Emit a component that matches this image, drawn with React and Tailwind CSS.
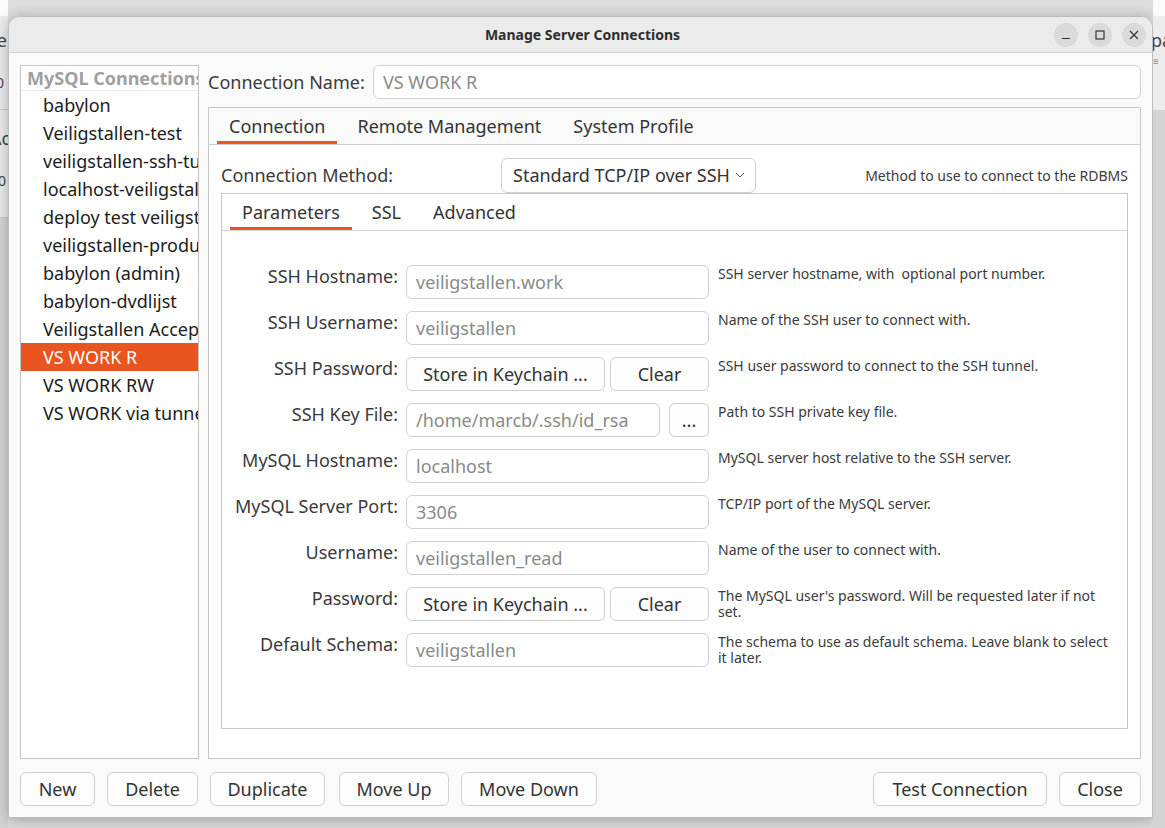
import React from "react";

const connections = [
  "babylon",
  "Veiligstallen-test",
  "veiligstallen-ssh-tunnel",
  "localhost-veiligstallen",
  "deploy test veiligstallen",
  "veiligstallen-productie",
  "babylon (admin)",
  "babylon-dvdlijst",
  "Veiligstallen Acceptatie",
  "VS WORK R",
  "VS WORK RW",
  "VS WORK via tunnel",
];

const Input = ({ value, className = "" }) => (
  <div
    className={`h-[34px] rounded-[6px] border border-[#d0d0d0] bg-white px-[9px] flex items-center text-[18px] text-[#8a8a8a] whitespace-nowrap overflow-hidden ${className}`}
  >
    {value}
  </div>
);

const Btn = ({ children, className = "" }) => (
  <div
    className={`h-[34px] rounded-[6px] border border-[#d0d0d0] bg-[#fdfdfd] flex items-center justify-center text-[18px] text-[#333] whitespace-nowrap ${className}`}
  >
    {children}
  </div>
);

const FormRow = ({ label, children, desc }) => (
  <div className="flex items-start">
    <div className="w-[176px] h-[34px] text-right leading-[22px] text-[18px] text-[#3a3a3a] whitespace-nowrap">
      {label}
    </div>
    <div className="w-[303px] ml-[8px] flex gap-[5px]">{children}</div>
    <div className="ml-[9px] w-[400px] text-[14px] leading-[16px] text-[#3a3a3a] pt-[1px]">
      {desc}
    </div>
  </div>
);

const Tab = ({ children, active }) => (
  <div
    className={`px-[12px] pt-[4px] h-full flex items-center text-[18px] text-[#333] border-b-[3px] ${
      active ? "border-[#e95420]" : "border-transparent"
    }`}
  >
    {children}
  </div>
);

export default function App() {
  return (
    <div
      className="w-[1165px] h-[828px] bg-[#dcdcdc] flex overflow-hidden"
      style={{ fontFamily: '"Noto Sans", "Open Sans", sans-serif' }}
    >
      {/* app behind, left */}
      <div className="w-[8px] shrink-0 flex flex-col bg-[#f4f4f4] overflow-hidden text-[#444] text-[18px]">
        <div className="h-[16px] bg-[#fafafa]" />
        <div className="h-[94px] border-b border-[#c8c8c8] bg-[#ececec] flex flex-col -ml-[12px]">
          <span className="mt-[12px] leading-[24px]">ce</span>
          <span className="mt-[20px] text-[14px]">30</span>
        </div>
        <div className="h-[108px] border-b border-[#c8c8c8] bg-[#ececec] flex flex-col -ml-[10px]">
          <span className="mt-[16px] leading-[24px]">Ac</span>
          <span className="mt-[20px] text-[14px]">30</span>
        </div>
        <div className="flex-1 bg-[#d4d4d4]" />
      </div>

      {/* dialog window */}
      <div className="mt-[16px] w-[1145px] h-[802px] shrink-0 rounded-t-[12px] bg-[#fafafa] border border-[#bdbdbd] shadow-[0_2px_14px_rgba(0,0,0,0.28)] flex flex-col overflow-hidden">
        {/* title bar */}
        <div className="h-[36px] shrink-0 bg-[#ebebeb] border-b border-[#d2d2d2] flex items-center relative">
          <div className="flex-1 text-center text-[14px] font-bold text-[#2e2e2e] pl-[4px]">
            Manage Server Connections
          </div>
          <div className="absolute right-[6px] top-[6px] flex gap-[10px]">
            <div className="w-[24px] h-[24px] rounded-full bg-[#dadada] flex items-center justify-center">
              <svg width="10" height="10" viewBox="0 0 10 10">
                <path d="M1 8.5h8" stroke="#333" strokeWidth="1.2" />
              </svg>
            </div>
            <div className="w-[24px] h-[24px] rounded-full bg-[#dadada] flex items-center justify-center">
              <svg width="10" height="10" viewBox="0 0 10 10">
                <rect x="1" y="1" width="8" height="8" fill="none" stroke="#333" strokeWidth="1.2" />
              </svg>
            </div>
            <div className="w-[24px] h-[24px] rounded-full bg-[#dadada] flex items-center justify-center">
              <svg width="10" height="10" viewBox="0 0 10 10">
                <path d="M1 1l8 8M9 1l-8 8" stroke="#333" strokeWidth="1.2" />
              </svg>
            </div>
          </div>
        </div>

        {/* body */}
        <div className="flex-1 flex flex-col px-[11px] pt-[12px] pb-[11px]">
          <div className="h-[694px] flex gap-[9px]">
            {/* connection list */}
            <div className="w-[179px] shrink-0 border border-[#c4c4c4] bg-white overflow-hidden">
              <div className="h-[25px] border-b border-[#ececec] pl-[6px] flex items-center text-[18px] font-bold text-[#a0a0a0] whitespace-nowrap">
                MySQL Connections
              </div>
              {connections.map((c) => (
                <div
                  key={c}
                  className={`h-[28px] pl-[22px] flex items-center text-[18px] whitespace-nowrap ${
                    c === "VS WORK R" ? "bg-[#e95420] text-white" : "text-[#1c1c1c]"
                  }`}
                >
                  {c}
                </div>
              ))}
            </div>

            {/* details */}
            <div className="flex-1 flex flex-col gap-[8px]">
              <div className="flex items-center gap-[8px]">
                <div className="text-[18px] text-[#3a3a3a] whitespace-nowrap w-[157px]">Connection Name:</div>
                <Input value="VS WORK R" className="flex-1" />
              </div>

              <div className="flex-1 border border-[#c8c8c8] flex flex-col bg-white">
                <div className="h-[37px] shrink-0 border-b border-[#cfcfcf] bg-[#fafafa] flex pl-[8px] gap-[8px]">
                  <Tab active>Connection</Tab>
                  <Tab>Remote Management</Tab>
                  <Tab>System Profile</Tab>
                </div>

                <div className="flex-1 flex flex-col px-[12px] pt-[12px] pb-[29px]">
                  <div className="h-[36px] flex items-center">
                    <div className="w-[280px] text-[18px] text-[#3a3a3a]">Connection Method:</div>
                    <div className="w-[255px] h-[35px] rounded-[6px] border border-[#d0d0d0] bg-white flex items-center pl-[11px] text-[18px] text-[#333] whitespace-nowrap">
                      Standard TCP/IP over SSH
                      <svg className="ml-[5px]" width="10" height="6" viewBox="0 0 10 6">
                        <path d="M1 1l4 4 4-4" fill="none" stroke="#555" strokeWidth="1" />
                      </svg>
                    </div>
                    <div className="flex-1 text-right text-[14px] text-[#3a3a3a] whitespace-nowrap">
                      Method to use to connect to the RDBMS
                    </div>
                  </div>

                  <div className="flex-1 border border-[#c8c8c8] flex flex-col">
                    <div className="h-[37px] shrink-0 border-b border-[#d6d6d6] flex pl-[8px] gap-[8px]">
                      <Tab active>Parameters</Tab>
                      <Tab>SSL</Tab>
                      <Tab>Advanced</Tab>
                    </div>
                    <div className="pt-[34px] flex flex-col gap-[12px]">
                      <FormRow label="SSH Hostname:" desc={"SSH server hostname, with\u00a0 optional port number."}>
                        <Input value="veiligstallen.work" className="w-full" />
                      </FormRow>
                      <FormRow label="SSH Username:" desc="Name of the SSH user to connect with.">
                        <Input value="veiligstallen" className="w-full" />
                      </FormRow>
                      <FormRow label="SSH Password:" desc="SSH user password to connect to the SSH tunnel.">
                        <Btn className="w-[199px]">Store in Keychain ...</Btn>
                        <Btn className="w-[99px]">Clear</Btn>
                      </FormRow>
                      <FormRow label="SSH Key File:" desc="Path to SSH private key file.">
                        <Input value="/home/marcb/.ssh/id_rsa" className="w-[254px]" />
                        <Btn className="w-[40px] ml-[4px] text-[15px]">...</Btn>
                      </FormRow>
                      <FormRow label="MySQL Hostname:" desc="MySQL server host relative to the SSH server.">
                        <Input value="localhost" className="w-full" />
                      </FormRow>
                      <FormRow label="MySQL Server Port:" desc="TCP/IP port of the MySQL server.">
                        <Input value="3306" className="w-full" />
                      </FormRow>
                      <FormRow label="Username:" desc="Name of the user to connect with.">
                        <Input value="veiligstallen_read" className="w-full" />
                      </FormRow>
                      <FormRow label="Password:" desc="The MySQL user's password. Will be requested later if not set.">
                        <Btn className="w-[199px]">Store in Keychain ...</Btn>
                        <Btn className="w-[99px]">Clear</Btn>
                      </FormRow>
                      <FormRow label="Default Schema:" desc="The schema to use as default schema. Leave blank to select it later.">
                        <Input value="veiligstallen" className="w-full" />
                      </FormRow>
                    </div>
                  </div>
                </div>
              </div>
            </div>
          </div>

          {/* bottom buttons */}
          <div className="mt-[13px] flex items-center">
            <Btn className="w-[75px]">New</Btn>
            <Btn className="w-[91px] ml-[12px]">Delete</Btn>
            <Btn className="w-[115px] ml-[12px]">Duplicate</Btn>
            <Btn className="w-[110px] ml-[14px]">Move Up</Btn>
            <Btn className="w-[136px] ml-[12px]">Move Down</Btn>
            <div className="flex-1" />
            <Btn className="w-[174px]">Test Connection</Btn>
            <Btn className="w-[82px] ml-[12px]">Close</Btn>
          </div>
        </div>
      </div>

      {/* app behind, right */}
      <div className="w-[12px] shrink-0 flex flex-col overflow-hidden text-[#444]">
        <div className="h-[16px] bg-[#fafafa]" />
        <div className="h-[94px] bg-[#ececec] flex flex-col">
          <span className="mt-[12px] text-[18px] leading-[24px] -ml-[2px]">pa</span>
          <span className="mt-[4px] text-[10px] leading-[10px] text-[#888]">≡</span>
        </div>
        <div className="flex-1 bg-[#d4d4d4]" />
      </div>
    </div>
  );
}
